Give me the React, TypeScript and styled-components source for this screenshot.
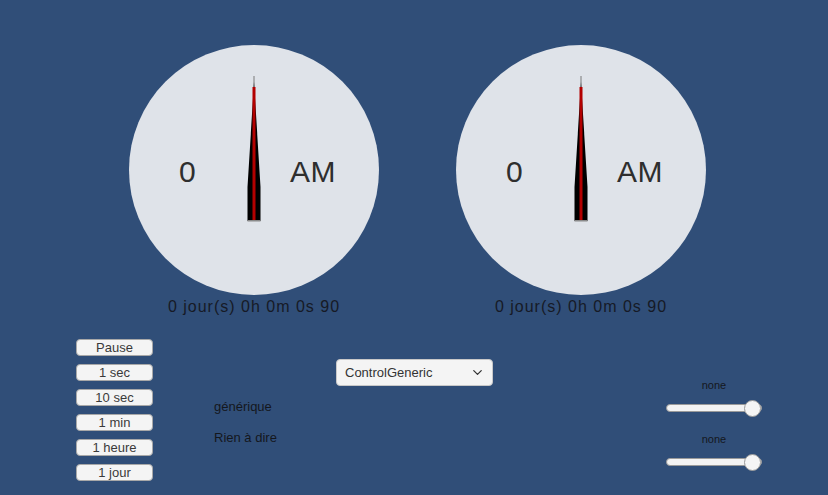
import React from 'react'
import styled, { createGlobalStyle } from 'styled-components'
import { ChevronDown } from 'lucide-react'

const GlobalStyle = createGlobalStyle`
  html, body {
    margin: 0;
    padding: 0;
    background: #304e78;
    font-family: 'Liberation Sans', Arial, sans-serif;
  }
`

const Clock: React.FC<{ hour: string; period: string; elapsed: string }> = ({
  hour,
  period,
  elapsed,
}) => {
  return (
    <ClockColumn>
      <Face>
        <FaceText>{hour}</FaceText>
        <FaceText>{period}</FaceText>
        <Needle viewBox="0 0 14 146" width="14" height="146">
          <rect x="6.5" y="0" width="1" height="12" fill="#7a7a7a" />
          <polygon points="7,6 13.5,111 13.5,145 0.5,145 0.5,111" fill="#000" />
          <rect x="5.5" y="11" width="3" height="134" fill="#b30000" />
          <rect x="0.5" y="144" width="13" height="1.5" fill="#8a8a8a" />
        </Needle>
      </Face>
      <Elapsed>{elapsed}</Elapsed>
    </ClockColumn>
  )
}

const Slider: React.FC<{ label: string }> = ({ label }) => {
  return (
    <SliderBlock>
      <SliderLabel>{label}</SliderLabel>
      <Track>
        <Thumb />
      </Track>
    </SliderBlock>
  )
}

const speeds = ['Pause', '1 sec', '10 sec', '1 min', '1 heure', '1 jour']

const App: React.FC = () => {
  return (
    <Page>
      <GlobalStyle />
      <ClockRow>
        <Clock hour="0" period="AM" elapsed="0 jour(s) 0h 0m 0s 90" />
        <Clock hour="0" period="AM" elapsed="0 jour(s) 0h 0m 0s 90" />
      </ClockRow>
      <BottomRow>
        <ButtonColumn>
          {speeds.map((s) => (
            <SpeedButton key={s}>{s}</SpeedButton>
          ))}
        </ButtonColumn>
        <InfoColumn>
          <InfoText>générique</InfoText>
          <InfoText>Rien à dire</InfoText>
        </InfoColumn>
        <Select>
          <span>ControlGeneric</span>
          <ChevronDown size={15} strokeWidth={2} color="#333" />
        </Select>
        <SliderColumn>
          <Slider label="none" />
          <Slider label="none" />
        </SliderColumn>
      </BottomRow>
    </Page>
  )
}

export default App

const Page = styled.div`
  width: 828px;
  height: 495px;
  overflow: hidden;
  padding-top: 45px;
  box-sizing: border-box;
`
const ClockRow = styled.div`
  display: flex;
  gap: 77px;
  padding-left: 129px;
`
const ClockColumn = styled.div`
  display: flex;
  flex-direction: column;
  align-items: center;
  width: 250px;
`
const Face = styled.div`
  position: relative;
  width: 250px;
  height: 250px;
  border-radius: 50%;
  background: #dfe3e9;
  display: flex;
  align-items: center;
  justify-content: space-between;
  padding: 4px 43px 0 50px;
  box-sizing: border-box;
`
const FaceText = styled.span`
  font-size: 30px;
  letter-spacing: 0.5px;
  color: #2e2e2e;
`
const Needle = styled.svg`
  position: absolute;
  left: 118px;
  top: 31px;
`
const Elapsed = styled.div`
  margin-top: 2px;
  font-size: 16px;
  line-height: 20px;
  letter-spacing: 1px;
  color: #161a26;
`
const BottomRow = styled.div`
  display: flex;
  align-items: flex-start;
  padding-left: 76px;
  margin-top: 22px;
`
const ButtonColumn = styled.div`
  display: flex;
  flex-direction: column;
  gap: 8px;
  width: 77px;
`
const SpeedButton = styled.button`
  height: 17px;
  padding: 0;
  border: 1px solid #a8a8a8;
  border-radius: 4px;
  background: #f4f4f4;
  font-family: 'Liberation Sans', Arial, sans-serif;
  font-size: 13px;
  line-height: 15px;
  color: #3a3a3a;
`
const InfoColumn = styled.div`
  display: flex;
  flex-direction: column;
  gap: 15px;
  width: 122px;
  margin-left: 61px;
  padding-top: 60px;
`
const InfoText = styled.div`
  font-size: 13px;
  line-height: 16px;
  color: #14171d;
`
const Select = styled.div`
  display: flex;
  align-items: center;
  justify-content: space-between;
  width: 157px;
  height: 27px;
  margin-top: 20px;
  padding: 0 7px 0 8px;
  box-sizing: border-box;
  border-radius: 4px;
  background: #f4f4f4;
  border: 1px solid #c8c8c8;
  font-size: 13px;
  color: #333;
`
const SliderColumn = styled.div`
  display: flex;
  flex-direction: column;
  gap: 21px;
  margin-left: 173px;
  margin-top: 40px;
`
const SliderBlock = styled.div`
  display: flex;
  flex-direction: column;
  align-items: center;
  width: 96px;
  gap: 12px;
`
const SliderLabel = styled.div`
  font-size: 11px;
  line-height: 13px;
  color: #14171d;
`
const Track = styled.div`
  position: relative;
  width: 96px;
  height: 8px;
  border-radius: 4px;
  background: #f3f3f3;
  border: 1px solid #9a9a9a;
  box-sizing: border-box;
`
const Thumb = styled.div`
  position: absolute;
  right: 0;
  top: 50%;
  width: 17px;
  height: 17px;
  margin-top: -8.5px;
  border-radius: 50%;
  background: #f5f5f5;
  border: 1px solid #9a9a9a;
  box-sizing: border-box;
`
